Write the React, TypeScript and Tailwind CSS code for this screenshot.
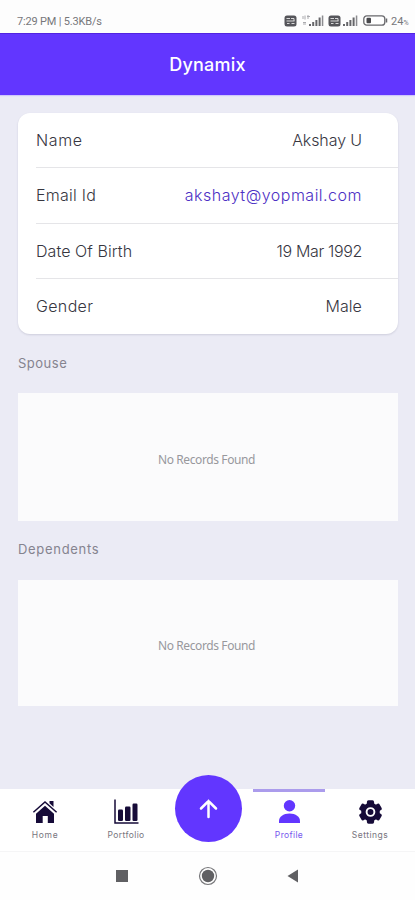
import React from "react";

const rows = [
  { label: "Name", value: "Akshay U", l: "tracking-[0.6px]", v: "tracking-[-0.1px]", color: "text-[#37363f]" },
  { label: "Email Id", value: "akshayt@yopmail.com", l: "tracking-[0.25px]", v: "tracking-[0.5px]", color: "text-[#4c2fc4]" },
  { label: "Date Of Birth", value: "19 Mar 1992", l: "tracking-[0.08px]", v: "tracking-[-0.35px]", color: "text-[#37363f]" },
  { label: "Gender", value: "Male", l: "tracking-[0.35px]", v: "tracking-[0.1px]", color: "text-[#37363f]" },
];

function Sim() {
  return (
    <svg width="13" height="12" viewBox="0 0 13 12">
      <rect x="0.5" y="0.5" width="12" height="11" rx="2.5" fill="#55555a" />
      <path d="M2.500 3.500h3.500M2.500 6h8M7 3.500h3v2.500M3 8.500h2.500M7.500 8.500h3" fill="none" stroke="#e8e8e8" strokeWidth="0.9" />
    </svg>
  );
}

function Bars() {
  return (
    <svg width="15" height="12" viewBox="0 0 15 12" fill="#66666a">
      <rect x="0" y="9" width="2" height="2" />
      <rect x="3.2" y="7" width="2" height="4" />
      <rect x="6.4" y="5" width="2" height="6" />
      <rect x="9.6" y="2.5" width="2" height="8.5" />
      <rect x="12.8" y="0.5" width="1.5" height="10.5" fill="#8c8c90" />
    </svg>
  );
}

function StatusBar() {
  return (
    <div className="flex h-[33px] items-start bg-[#fdfdfd] pl-[17px] pt-[15px] text-[#77777b]">
      <span className="w-[267px] whitespace-nowrap font-['Roboto'] text-[11px] leading-[14px] tracking-[-0.18px]">
        7:29 PM | 5.3KB/s
      </span>
      <Sim />
      <svg className="-mt-px ml-[5px]" width="10" height="12" viewBox="0 0 10 12" fill="none" stroke="#aaaaae" strokeWidth="1">
        <path d="M1 2v3M3 1.500v4M5 2.500h3M6 1v4M1 8.500h3M1 10h3" />
      </svg>
      <div className="-ml-[3px]"><Bars /></div>
      <div className="ml-1"><Sim /></div>
      <div className="ml-[2px]"><Bars /></div>
      <svg className="ml-[5px]" width="25" height="11" viewBox="0 0 25 11">
        <rect x="0.8" y="0.8" width="21" height="9.400" rx="3" fill="white" stroke="#68686c" strokeWidth="1.300" />
        <rect x="3.500" y="2.800" width="4.500" height="5.400" rx="1" fill="#48484c" />
        <path d="M23.500 3.500v4" stroke="#68686c" strokeWidth="1.500" />
      </svg>
      <span className="ml-[3px] whitespace-nowrap font-['Roboto'] text-[11px] leading-[14px]">
        24<span className="text-[7px]">%</span>
      </span>
    </div>
  );
}

function Empty({ title, track, gap, box }: { title: string; track: string; gap: string; box: string }) {
  return (
    <section className={gap}>
      <h2 className={`h-5 text-[13px] font-normal leading-5 text-[#85838f] ${track}`}>{title}</h2>
      <div className={`flex items-center justify-center bg-[#fbfbfc] pr-[3px] font-['Noto_Sans'] text-[12px] tracking-[-0.4px] text-[#98989c] ${box}`}>
        <span className="whitespace-nowrap pt-[6px]">No Records Found</span>
      </div>
    </section>
  );
}

function HomeIcon() {
  return (
    <svg width="26" height="26" viewBox="0 0 26 26" fill="#160b38">
      <path d="M17.500 2h4v6l-4-3.800z" />
      <path d="M13 6.800 22 14.800V24h-6.200v-7h-5.100v7H4v-9.200z" />
      <path d="M1.400 13.300 13 3l11.600 10.300" fill="none" stroke="#160b38" strokeWidth="1.500" />
    </svg>
  );
}

function ChartIcon() {
  return (
    <svg width="26" height="26" viewBox="0 0 26 26" fill="#160b38">
      <path d="M2 0.500V24h23.500" fill="none" stroke="#160b38" strokeWidth="1.500" />
      <rect x="5" y="10.500" width="5" height="11.500" rx="1.200" />
      <rect x="12" y="7.500" width="5.500" height="14.500" rx="1.200" />
      <rect x="19.500" y="4.500" width="5" height="17.500" rx="1.200" />
    </svg>
  );
}

function PersonIcon() {
  return (
    <svg width="26" height="26" viewBox="0 0 26 26" fill="#6236ff">
      <circle cx="13.500" cy="6.800" r="5.700" />
      <path d="M3 24v-1.700c0-4.700 4.300-7.800 10.500-7.800S24 17.600 24 22.300V24z" />
    </svg>
  );
}

function GearIcon() {
  return (
    <svg width="26" height="26" viewBox="0 0 26 26">
      <g fill="#160b38">
        <circle cx="13.500" cy="13" r="9.300" />
        {[0, 60, 120].map((a) => (
          <rect key={a} x="9.900" y="1.300" width="7.200" height="23.400" rx="1.600" transform={`rotate(${a} 13.5 13)`} />
        ))}
      </g>
      <circle cx="13.500" cy="13" r="3.900" fill="#160b38" stroke="white" strokeWidth="1.900" />
    </svg>
  );
}

function Tab({ label, icon, active, track }: { label: string; icon: React.ReactNode; active?: boolean; track: string }) {
  return (
    <div className={`flex w-[72px] flex-col items-center border-t-[3px] pt-[7px] ${active ? "border-[#ab9cec]" : "border-transparent"}`}>
      <div className="h-[26px]">{icon}</div>
      <span className={`mt-[4px] h-3 text-[8.500px] leading-3 ${track} ${active ? "text-[#7657ee]" : "text-[#77757e]"}`}>{label}</span>
    </div>
  );
}

export default function App() {
  return (
    <div className="flex h-[900px] w-[415px] flex-col overflow-hidden bg-[#ebebf5] font-['Inter',sans-serif]">
      <StatusBar />
      <header className="flex h-[62px] items-center justify-center border-t border-[#5224e0] bg-[#6236ff] shadow-[0_1px_1px_#cfc6fb]">
        <h1 className="text-[18px] font-medium tracking-[0.25px] text-white">Dynamix</h1>
      </header>
      <main className="flex-1 px-[18px] pr-[17px] pt-[18px]">
        <div className="overflow-hidden rounded-[12px] bg-white pl-[18px] shadow-[0_1px_2px_rgba(80,80,110,0.18)]">
          {rows.map((r, i) => (
            <div key={r.label} className={`flex items-center justify-between pr-9 text-[16px] font-light text-[#37363f] ${i < 3 ? "h-[55.300px] border-b-[1.500px] border-[#e5e5e8]" : "h-[55.100px] pb-px"}`}>
              <span className={`whitespace-nowrap ${r.l}`}>{r.label}</span>
              <span className={`whitespace-nowrap ${r.v} ${r.color}`}>{r.value}</span>
            </div>
          ))}
        </div>
        <Empty title="Spouse" track="tracking-[0.5px]" gap="mt-[19px]" box="mt-[20px] h-[128px]" />
        <Empty title="Dependents" track="tracking-[0.700px]" gap="mt-[18px]" box="mt-[21px] h-[126px]" />
      </main>
      <nav className="relative flex h-[62px] shrink-0 bg-white pl-[9px]">
        <Tab label="Home" icon={<HomeIcon />} track="tracking-[0.700px]" />
        <div className="ml-[9px]"><Tab label="Portfolio" icon={<ChartIcon />} track="tracking-[0.400px]" /></div>
        <div className="absolute left-[175px] top-[-14px] flex h-[67px] w-[67px] items-center justify-center rounded-full bg-[#6236ff]">
          <svg width="22" height="22" viewBox="0 0 22 22" fill="none" stroke="white" strokeWidth="2.500" strokeLinecap="round">
            <path d="M10.500 19V3M3 10.500 10.500 3l7.500 7.500" />
          </svg>
        </div>
        <div className="ml-[91px]"><Tab label="Profile" icon={<PersonIcon />} active track="tracking-[0.350px]" /></div>
        <div className="ml-[9px]"><Tab label="Settings" icon={<GearIcon />} track="tracking-[0.500px]" /></div>
      </nav>
      <footer className="flex h-[49px] shrink-0 items-center border-t border-[#f5f5f6] bg-[#fefefe] pl-[116px]">
        <div className="h-3 w-3 bg-[#606063]" />
        <svg className="ml-[70px]" width="20" height="20" viewBox="0 0 20 20">
          <circle cx="10" cy="10" r="8.500" fill="none" stroke="#77777a" strokeWidth="1.200" />
          <circle cx="10" cy="10" r="6.200" fill="#606063" />
        </svg>
        <svg className="ml-[69px]" width="12" height="14" viewBox="0 0 12 14">
          <path d="M11 0.500v13L0.500 7z" fill="#606063" />
        </svg>
      </footer>
    </div>
  );
}
